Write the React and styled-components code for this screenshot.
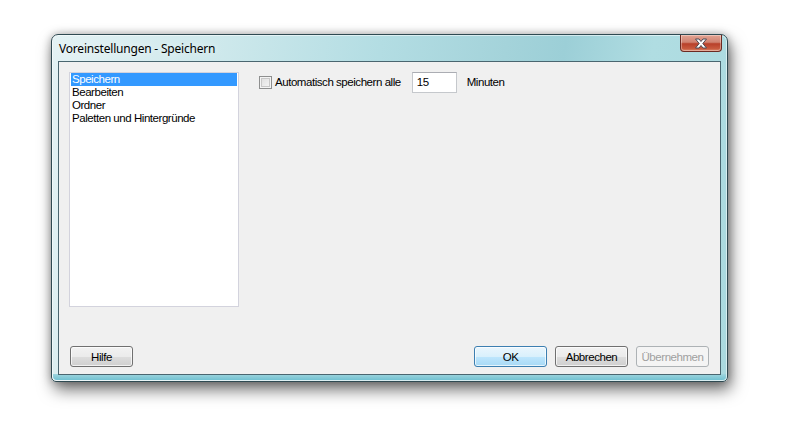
import React from 'react'
import styled, { createGlobalStyle } from 'styled-components'

const GlobalStyle = createGlobalStyle`
  html, body {
    margin: 0;
    padding: 0;
    background: #ffffff;
  }
  body {
    font-family: "Liberation Sans", Arial, sans-serif;
  }
`;

const Page = styled.div`
  width: 810px;
  height: 446px;
  padding: 34px 0 0 51px;
  box-sizing: border-box;
  background: #ffffff;
`;

const Window = styled.div`
  width: 677px;
  height: 348px;
  box-sizing: border-box;
  border: 1px solid #2f4a52;
  border-radius: 7px 7px 5px 5px;
  background: linear-gradient(100deg, #e4f2f4 0%, #cfe9ec 22%, #b3dde3 45%, #a4d3da 62%, #9ccfd7 70%, #b0dde2 82%, #aad9df 100%);
  box-shadow: 3px 8px 16px rgba(0, 0, 0, 0.55), 0 0 9px rgba(0, 0, 0, 0.28), inset 0 0 0 1px rgba(255, 255, 255, 0.55);
  display: flex;
  flex-direction: column;
  padding: 0 6px 6px 6px;
  position: relative;
  &::after {
    content: '';
    position: absolute;
    left: 1px;
    right: 1px;
    bottom: 1px;
    height: 6px;
    border-radius: 0 0 4px 4px;
    background: linear-gradient(#9fd5de, #72c2d2);
    pointer-events: none;
  }
`;

const TitleBar = styled.div`
  height: 26px;
  display: flex;
  align-items: flex-start;
  justify-content: space-between;
`;

const Title = styled.div`
  font-family: "Noto Sans", "Open Sans", sans-serif;
  font-size: 12px;
  letter-spacing: -0.2px;
  color: #000;
  padding: 5px 0 0 1px;
  text-shadow: 0 0 8px rgba(255, 255, 255, 0.9);
`;

const CloseButton = styled.div`
  width: 42px;
  height: 17px;
  box-sizing: border-box;
  margin-right: -1px;
  border: 1px solid #6b2a22;
  border-top: none;
  border-radius: 0 0 4px 4px;
  background: linear-gradient(#e3a393 0%, #d08371 45%, #b8402a 55%, #c85a3e 85%, #dc8a6e 100%);
  box-shadow: inset 0 0 0 1px rgba(255, 255, 255, 0.35);
  display: flex;
  align-items: center;
  justify-content: center;
`;

const Client = styled.div`
  flex: 1;
  position: relative;
  z-index: 1;
  border: 1px solid #4a6670;
  background: #f0f0f0;
  display: flex;
  flex-direction: column;
  padding: 10px 11px 7px 10px;
  font-size: 11.5px;
  letter-spacing: -0.45px;
`;

const Body = styled.div`
  display: flex;
  flex: 1;
  gap: 20px;
`;

const ListBox = styled.div`
  width: 170px;
  height: 235px;
  box-sizing: border-box;
  border: 1px solid #d3d3dd;
  background: #ffffff;
  padding: 0 1px;
`;

const ListItem = styled.div`
  height: 13px;
  line-height: 13px;
  padding-left: 1px;
  color: ${props => props.selected ? '#ffffff' : '#000000'};
  background: ${props => props.selected ? '#3399ff' : 'transparent'};
`;

const Options = styled.div`
  display: flex;
  align-items: center;
  height: 22px;
  margin-top: -1px;
  color: #000;
`;

const Check = styled.span`
  width: 13px;
  height: 13px;
  box-sizing: border-box;
  border: 1px solid #8e8f8f;
  background: linear-gradient(135deg, #dcdcdc, #f8f8f8);
  box-shadow: inset 0 0 0 1px #f4f4f4, inset 0 0 0 2px #c8c8c8;
  margin-right: 3px;
`;

const NumberField = styled.div`
  width: 45px;
  height: 21px;
  box-sizing: border-box;
  margin: 0 10px 0 11px;
  border: 1px solid #c5c8cc;
  border-top-color: #abadb3;
  background: #ffffff;
  padding: 3px 0 0 4px;
`;

const ButtonRow = styled.div`
  display: flex;
  align-items: center;
  gap: 8px;
  padding-left: 1px;
`;

const Spacer = styled.div`
  flex: 1;
`;

const Button = styled.div`
  width: ${props => props.w || 73}px;
  height: 21px;
  box-sizing: border-box;
  border: 1px solid ${props => props.primary ? '#3c7fb1' : props.disabled ? '#adb2b5' : '#707070'};
  border-radius: 3px;
  background: ${props => props.disabled
    ? '#f4f4f4'
    : props.primary
      ? 'linear-gradient(#eaf6fd 0%, #d9f0fc 50%, #bee6fd 51%, #a7d9f5 100%)'
      : 'linear-gradient(#f2f2f2 0%, #ebebeb 50%, #dddddd 51%, #cfcfcf 100%)'};
  box-shadow: inset 0 0 0 1px ${props => props.disabled ? '#f4f4f4' : 'rgba(255,255,255,0.7)'};
  display: flex;
  align-items: center;
  justify-content: center;
  color: ${props => props.disabled ? '#a0a0a0' : '#000000'};
`;

const items = ['Speichern', 'Bearbeiten', 'Ordner', 'Paletten und Hintergründe'];

export default function App() {
  return (
    <Page>
      <GlobalStyle />
      <Window>
        <TitleBar>
          <Title>Voreinstellungen - Speichern</Title>
          <CloseButton>
            <svg width="14" height="11" viewBox="0 0 14 11">
              <path
                d="M1.5 1 H5 L7 3.5 L9 1 H12.5 L8.8 5.5 L12.5 10 H9 L7 7.5 L5 10 H1.5 L5.2 5.5 Z"
                fill="#ffffff"
                stroke="#4a4a55"
                strokeWidth="1"
                strokeLinejoin="round"
              />
            </svg>
          </CloseButton>
        </TitleBar>
        <Client>
          <Body>
            <ListBox>
              {items.map((item, i) => (
                <ListItem key={item} selected={i === 0}>{item}</ListItem>
              ))}
            </ListBox>
            <div>
              <Options>
                <Check />
                <span>Automatisch speichern alle</span>
                <NumberField>15</NumberField>
                <span>Minuten</span>
              </Options>
            </div>
          </Body>
          <ButtonRow>
            <Button w={63}>Hilfe</Button>
            <Spacer />
            <Button primary>OK</Button>
            <Button>Abbrechen</Button>
            <Button disabled>Übernehmen</Button>
          </ButtonRow>
        </Client>
      </Window>
    </Page>
  );
}
